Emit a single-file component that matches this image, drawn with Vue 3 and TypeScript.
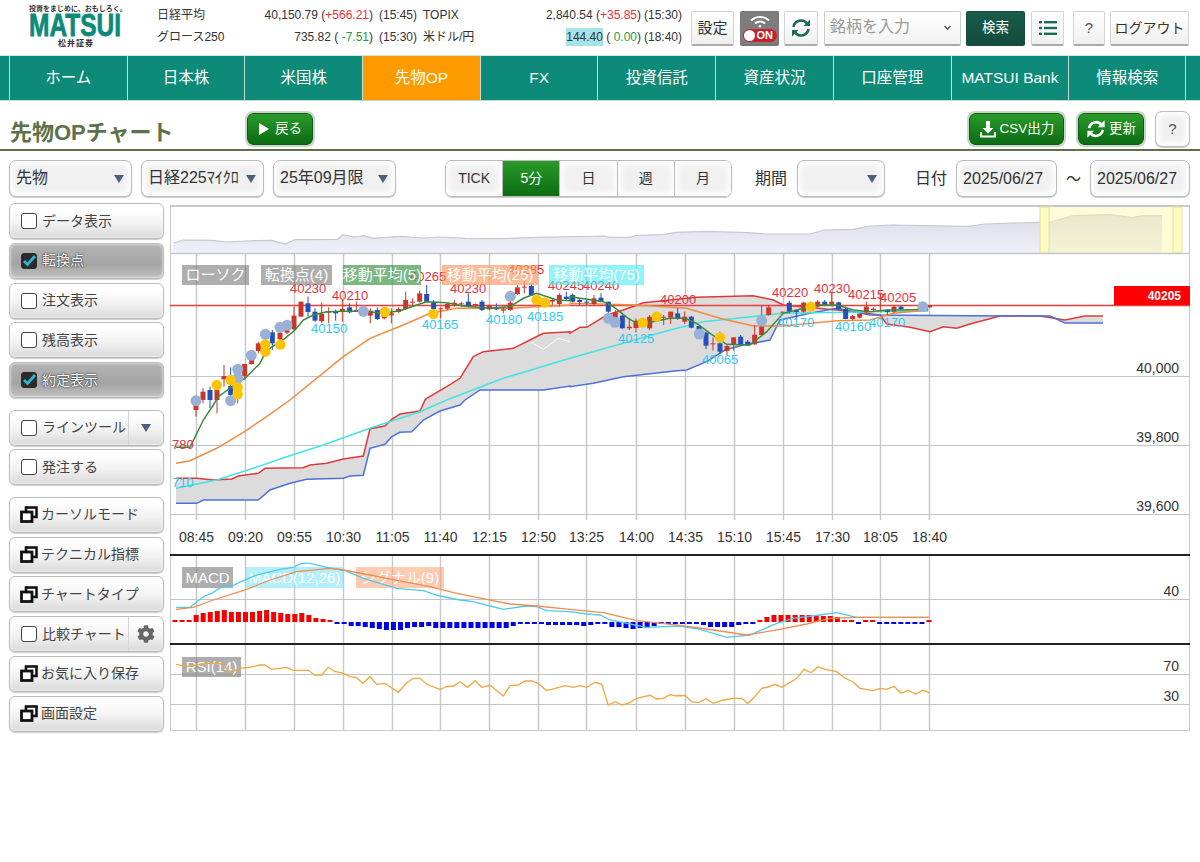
<template>
  <div class="page">
    <header class="top">
      <div class="logo">
        <div class="catch">投資をまじめに、おもしろく。</div>
        <div class="logo-word">MATSUI</div>
        <div class="logo-ja">松井証券</div>
      </div>

      <div class="quotes">
        <span>日経平均</span>
        <span class="num">40,150.79 (<em class="up">+566.21</em>)</span>
        <span class="time">(15:45)</span>
        <span>TOPIX</span>
        <span class="num">2,840.54 (<em class="up">+35.85</em>)</span>
        <span class="time">(15:30)</span>
        <span>グロース250</span>
        <span class="num">735.82 ( <em class="down">-7.51</em>)</span>
        <span class="time">(15:30)</span>
        <span>米ドル/円</span>
        <span class="num"><mark>144.40</mark> ( <em class="down">0.00</em>)</span>
        <span class="time">(18:40)</span>
      </div>

      <div class="tools">
        <button class="tbtn setting">設定</button>
        <button class="tbtn wifi">
          <svg width="24" height="14" viewBox="0 0 24 14" fill="none" stroke="#fff" stroke-width="2">
            <path d="M3 6.5a13 13 0 0 1 18 0" />
            <path d="M7 9.5a7.5 7.5 0 0 1 10 0" />
            <circle cx="12" cy="12.2" r="1.3" fill="#fff" stroke="none" />
          </svg>
          <span class="on-pill"><i></i>ON</span>
        </button>
        <button class="tbtn reload">
          <svg width="22" height="22" viewBox="0 0 22 22" fill="none" stroke="#1d6b57" stroke-width="2.6">
            <path d="M3.5 10a7.6 7.6 0 0 1 13.5-3.5" />
            <path d="M18.5 12a7.6 7.6 0 0 1-13.5 3.5" />
            <path d="M20 2.5v6.5h-6.5z" fill="#1d6b57" stroke="none" />
            <path d="M2 19.5v-6.5h6.5z" fill="#1d6b57" stroke="none" />
          </svg>
        </button>
        <div class="symbol">銘柄を入力<i></i></div>
        <button class="tbtn search">検索</button>
        <button class="tbtn list">
          <svg width="18" height="14" viewBox="0 0 18 14" fill="#1d6b57">
            <rect x="0" y="0" width="3" height="2.4" /><rect x="5" y="0" width="13" height="2.4" />
            <rect x="0" y="5.8" width="3" height="2.4" /><rect x="5" y="5.8" width="13" height="2.4" />
            <rect x="0" y="11.6" width="3" height="2.4" /><rect x="5" y="11.6" width="13" height="2.4" />
          </svg>
        </button>
        <button class="tbtn help">?</button>
        <button class="tbtn logout">ログアウト</button>
      </div>
    </header>

    <nav class="nav">
      <a v-for="item in navItems" :key="item" :class="{ active: item === '先物OP' }">{{ item }}</a>
    </nav>

    <div class="title-row">
      <h1>先物OPチャート</h1>
      <button class="gbtn back">
        <svg width="12" height="14" viewBox="0 0 12 14"><path d="M1 1l10 6-10 6z" fill="#fff" /></svg>
        戻る
      </button>
      <button class="gbtn csv">
        <svg width="18" height="18" viewBox="0 0 18 18" fill="#fff">
          <path d="M7 1h4v7h3.5l-5.5 5.5-5.5-5.5h3.500z" />
          <path d="M1 12h2v3.5h12v-3.5h2v5.5h-16z" />
        </svg>
        CSV出力
      </button>
      <button class="gbtn renew">
        <svg width="20" height="20" viewBox="0 0 22 22" fill="none" stroke="#fff" stroke-width="3">
          <path d="M3.5 10a7.6 7.6 0 0 1 13.5-3.5" />
          <path d="M18.5 12a7.6 7.6 0 0 1-13.5 3.5" />
          <path d="M20.5 1.5v7.5h-7.5z" fill="#fff" stroke="none" />
          <path d="M1.5 20.5v-7.5h7.5z" fill="#fff" stroke="none" />
        </svg>
        更新
      </button>
      <button class="soft help-2">?</button>
    </div>

    <div class="controls">
      <div class="soft sel w-type">先物<i></i></div>
      <div class="soft sel w-type">日経225ﾏｲｸﾛ<i></i></div>
      <div class="soft sel w-type">25年09月限<i></i></div>
      <div class="segments">
        <span v-for="s in segments" :key="s" :class="{ active: s === '5分' }">{{ s }}</span>
      </div>
      <label class="lab period">期間</label>
      <div class="soft sel w-period"><i></i></div>
      <label class="lab date">日付</label>
      <div class="soft field">2025/06/27</div>
      <span class="tilde">～</span>
      <div class="soft field last">2025/06/27</div>
    </div>

    <div class="body">
      <aside class="side">
        <div v-for="(group, g) in sideGroups" :key="g" class="side-group">
          <div v-for="b in group" :key="b.label" class="side-btn" :class="{ selected: b.checked }">
            <svg v-if="b.kind === 'win'" class="win" width="18" height="17" viewBox="0 0 18 17">
              <rect x="6" y="1.5" width="10.5" height="9.5" fill="#fff" stroke="#111" stroke-width="2.6" />
              <rect x="1.5" y="6" width="10.5" height="9.5" fill="#fff" stroke="#111" stroke-width="2.8" />
            </svg>
            <span v-else class="check" :class="{ checked: b.checked }">
              <svg v-if="b.checked" width="15" height="13" viewBox="0 0 15 13" fill="none">
                <path d="M2 7l3.5 3.5 7.5-8.5" stroke="#2fb4d2" stroke-width="2.8" />
              </svg>
            </span>
            <span class="side-label">{{ b.label }}</span>
            <span v-if="b.extra === 'arrow'" class="extra"><i class="tri"></i></span>
            <span v-if="b.extra === 'gear'" class="extra">
              <svg width="18" height="18" viewBox="0 0 512 512">
                <path fill="#666" d="M487.4 315.7l-42.6-24.6c4.3-23.2 4.3-47 0-70.2l42.6-24.6c4.9-2.8 7.1-8.6 5.5-14-11.1-35.6-30-67.8-54.7-94.6-3.8-4.1-10-5.1-14.8-2.3L380.8 110c-17.9-15.4-38.5-27.3-60.8-35.1V25.8c0-5.6-3.9-10.5-9.4-11.7-36.7-8.2-74.3-7.8-109.2 0-5.5 1.2-9.4 6.1-9.4 11.7V75c-22.2 7.9-42.8 19.8-60.8 35.1L88.7 85.5c-4.9-2.8-11-1.9-14.8 2.3-24.7 26.7-43.6 58.9-54.7 94.6-1.7 5.4.6 11.2 5.5 14L67.3 221c-4.3 23.2-4.3 47 0 70.2l-42.6 24.6c-4.9 2.8-7.1 8.6-5.5 14 11.1 35.6 30 67.8 54.7 94.6 3.8 4.1 10 5.1 14.8 2.3l42.6-24.6c17.9 15.4 38.5 27.3 60.8 35.1v49.2c0 5.6 3.9 10.5 9.4 11.7 36.7 8.2 74.3 7.8 109.2 0 5.5-1.2 9.4-6.1 9.4-11.7v-49.2c22.2-7.9 42.8-19.8 60.8-35.1l42.6 24.6c4.9 2.8 11 1.9 14.8-2.3 24.7-26.7 43.6-58.9 54.7-94.6 1.5-5.5-.7-11.3-5.6-14.1zM256 336c-44.1 0-80-35.9-80-80s35.9-80 80-80 80 35.9 80 80-35.9 80-80 80z" />
              </svg>
            </span>
          </div>
        </div>
      </aside>

      <svg class="chart" width="1020" height="527" viewBox="170 205 1020 527">
        <defs>
          <linearGradient id="navFill" x1="0" y1="0" x2="0" y2="1">
            <stop offset="0" stop-color="#dcdcea" />
            <stop offset="1" stop-color="#f0f0fa" />
          </linearGradient>
        </defs>

        <!-- navigator -->
        <rect x="170.5" y="205.5" width="1019" height="525" fill="#fff" stroke="#c8c8c8" />
        <rect x="170" y="205" width="1020" height="2" fill="#c8c8c8" />
        <polygon :points="navArea" fill="url(#navFill)" />
        <polyline :points="navLine" fill="none" stroke="#c8c8d0" stroke-width="1.2" />
        <rect x="1040" y="207" width="142" height="46" fill="#fbf7a8" fill-opacity="0.45" />
        <rect x="1040" y="207" width="9" height="46" fill="#fdfbc0" stroke="#e6e2a0" />
        <rect x="1173" y="207" width="9" height="46" fill="#fdfbc0" stroke="#e6e2a0" />
        <line x1="170" y1="253.5" x2="1190" y2="253.5" stroke="#c8c8c8" stroke-width="1.5" />

        <!-- grid -->
        <g stroke="#c8c8c8" stroke-width="1.5">
          <line v-for="x in gridX" :key="'m' + x" :x1="x" y1="254" :x2="x" y2="520" />
          <line v-for="x in gridX" :key="'c' + x" :x1="x" y1="556" :x2="x" y2="644" />
          <line v-for="x in gridX" :key="'r' + x" :x1="x" y1="645" :x2="x" y2="731" />
        </g>
        <g stroke="#c4c4c4" stroke-width="1.2">
          <line v-for="y in gridY" :key="y" x1="170" :y1="y" x2="1190" :y2="y" />
        </g>

        <!-- ichimoku cloud -->
        <polygon :points="cloudArea" fill="#dcdcdc" />
        <polyline :points="whiteLine" fill="none" stroke="#fff" />
        <polyline :points="cloudTopLine" fill="none" stroke="#de3a3a" stroke-width="1.5" />
        <polyline :points="cloudBottomLine" fill="none" stroke="#4a72dc" stroke-width="1.5" />
        <line x1="170" y1="305.5" x2="1190" y2="305.5" stroke="#ee3c3c" stroke-width="1.5" />
        <polyline :points="sma75" fill="none" stroke="#45e2e2" stroke-width="1.5" />
        <polyline :points="sma25" fill="none" stroke="#f08c42" stroke-width="1.5" />

        <!-- candles -->
        <g v-for="(c, i) in candles" :key="i" :fill="c.color" :stroke="c.color">
          <line :x1="c.x" :y1="c.wickTop" :x2="c.x" :y2="c.wickBottom" stroke-width="1" />
          <rect :x="c.x - 2.5" :y="c.top" width="5" :height="c.height" stroke="none" />
        </g>
        <polyline :points="sma5" fill="none" stroke="#3a8a3c" stroke-width="1.5" />

        <circle v-for="(p, i) in blueDots" :key="'b' + i" :cx="p[0]" :cy="p[1]" r="5.5" fill="#9ab1d6" />
        <circle v-for="(p, i) in yellowDots" :key="'y' + i" :cx="p[0]" :cy="p[1]" r="5.2" fill="#fcc400" />

        <text v-for="(t, i) in redLabels" :key="'rl' + i" class="peak" :x="t[1]" :y="t[2]">{{ t[0] }}</text>
        <text v-for="(t, i) in cyanLabels" :key="'cl' + i" class="bottom" :x="t[1]" :y="t[2]">{{ t[0] }}</text>

        <!-- legends -->
        <g v-for="l in legends" :key="l.text">
          <rect :x="l.x" :y="l.y" :width="l.w" :height="l.h" :fill="l.fill" />
          <text class="legend" :x="l.x + l.w / 2" :y="l.y + l.h - 5">{{ l.text }}</text>
        </g>

        <!-- axis -->
        <rect x="1114" y="286" width="76" height="19" fill="#ff0000" />
        <text class="price" x="1181" y="300">40205</text>
        <text v-for="t in axisY" :key="t[0]" class="axis-y" x="1179" :y="t[1]">{{ t[0] }}</text>
        <text v-for="(t, i) in timeLabels" :key="t" class="axis-x" :x="gridX[i]" y="542">{{ t }}</text>

        <!-- MACD -->
        <line x1="170" y1="555" x2="1190" y2="555" stroke="#222" stroke-width="2" />
        <rect
          v-for="(b, i) in macdBars"
          :key="'h' + i"
          :x="b.x"
          :y="b.y"
          width="5"
          :height="b.h"
          :fill="b.color"
        />
        <polyline :points="macdLine" fill="none" stroke="#4fcbe8" stroke-width="1.3" />
        <polyline :points="signalLine" fill="none" stroke="#ef8d50" stroke-width="1.3" />

        <!-- RSI -->
        <line x1="170" y1="644" x2="1190" y2="644" stroke="#222" stroke-width="2" />
        <polyline :points="rsiLine" fill="none" stroke="#f0a63f" stroke-width="1.3" />
      </svg>
    </div>
  </div>
</template>

<script setup lang="ts">
type Pt = number[];

const navItems = ['ホーム', '日本株', '米国株', '先物OP', 'FX', '投資信託', '資産状況', '口座管理', 'MATSUI Bank', '情報検索'];
const segments = ['TICK', '5分', '日', '週', '月'];

interface SideBtn {
  label: string;
  kind?: string;
  checked?: boolean;
  extra?: string;
}

const sideGroups: SideBtn[][] = [
  [
    { label: 'データ表示' },
    { label: '転換点', checked: true },
    { label: '注文表示' },
    { label: '残高表示' },
    { label: '約定表示', checked: true },
  ],
  [{ label: 'ラインツール', extra: 'arrow' }, { label: '発注する' }],
  [
    { label: 'カーソルモード', kind: 'win' },
    { label: 'テクニカル指標', kind: 'win' },
    { label: 'チャートタイプ', kind: 'win' },
    { label: '比較チャート', extra: 'gear' },
    { label: 'お気に入り保存', kind: 'win' },
    { label: '画面設定', kind: 'win' },
  ],
];

// coordinates below were read off 3x crops, so each block has its own origin
const from = (ox: number, oy: number, raw: number[]): Pt[] => {
  const out: Pt[] = [];
  for (let i = 0; i < raw.length; i += 2) out.push([ox + raw[i] / 3, oy + raw[i + 1] / 3]);
  return out;
};
const str = (pts: Pt[]) => pts.map((p) => `${p[0].toFixed(1)},${p[1].toFixed(1)}`).join(' ');

const gridX = [196, 245, 294, 343, 392, 440, 489, 538, 586, 636, 685, 734, 783, 832, 880, 929].map((x) => x + 0.5);
const gridY = [376.5, 445.5, 514.5, 599.5, 674.5, 704.5];

const timeLabels = ['08:45', '09:20', '09:55', '10:30', '11:05', '11:40', '12:15', '12:50', '13:25', '14:00', '14:35', '15:10', '15:45', '17:30', '18:05', '18:40'];
const axisY = [['40,000', 373], ['39,800', 442], ['39,600', 511], ['40', 596], ['70', 671], ['30', 701]] as [string, number][];

// navigator
const navRaw = [5,130, 20,120, 65,121, 85,126, 130,122, 155,121, 175,132, 190,119, 255,118, 263,104, 280,111, 295,107, 310,115, 350,109, 385,114, 410,111, 450,115, 500,116, 560,112, 660,108, 670,112, 700,112, 710,106, 750,104, 770,97, 815,94, 880,98, 905,102, 975,102, 995,90, 1040,88, 1065,78, 1100,75, 1215,79, 1240,72, 1320,67, 1340,66, 1375,47, 1430,44, 1465,53, 1480,47, 1510,47];
const navPts: Pt[] = [];
for (let i = 0; i < navRaw.length; i += 2) navPts.push([170 + navRaw[i] / 1.522, 200 + navRaw[i + 1] / 3]);
const navLine = str(navPts);
const navArea = str([[172, 253], ...navPts, [navPts[navPts.length - 1][0], 253]]);

// ichimoku
const cloudTop: Pt[] = [
  ...from(170, 400, [18,235, 80,235, 130,240, 185,237, 205,228, 265,220, 285,205, 400,203, 420,195, 470,190, 520,177, 580,168, 600,86, 645,78, 665,58, 690,42, 750,33, 765,0]),
  ...from(170, 250, [770,445, 830,410, 870,385, 910,320, 940,305, 1030,295, 1080,270, 1120,250, 1200,245]),
  ...from(570, 250, [0,250, 30,232, 50,232, 110,195, 160,180, 220,158, 380,142, 550,137, 610,150, 640,165, 800,180, 930,195, 950,222, 1020,232, 1080,245, 1120,230, 1160,235, 1200,222]),
  [970, 324], [1000, 316], [1040, 316], [1065, 320], [1085, 316], [1103, 316],
];
const cloudBottom: Pt[] = [
  ...from(170, 400, [18,310, 80,310, 100,300, 265,300, 300,270, 360,250, 410,238, 520,235, 540,228, 580,226, 600,145, 645,133, 665,110, 690,97, 725,95, 760,60, 810,33, 870,15, 885,0]),
  ...from(170, 250, [930,420, 1120,420, 1200,408]),
  ...from(570, 250, [0,410, 70,400, 160,380, 320,362, 350,360, 410,335, 465,300, 520,285, 600,270, 630,210, 720,190, 800,175, 900,195, 1200,197]),
  [1050, 316], [1065, 323], [1103, 323],
];
const cloudTopLine = str(cloudTop);
const cloudBottomLine = str(cloudBottom);
const cloudArea = str([...cloudTop, ...[...cloudBottom].reverse()]);
const whiteLine = str(from(170, 250, [1080,275, 1120,298, 1165,265, 1200,275]));

const sma5 = str([
  ...from(170, 400, [18,142, 60,142, 100,60, 130,15]),
  ...from(170, 250, [145,440, 200,400, 225,385, 270,340, 285,310, 300,295, 345,265, 375,240, 400,210, 430,195, 470,185, 520,184, 580,184, 640,190, 690,182, 740,165, 770,155, 830,158, 880,168, 960,175, 1020,170, 1060,145, 1100,130, 1160,150, 1200,152]),
  ...from(570, 250, [0,140, 100,155, 130,170, 175,205, 200,220, 240,217, 300,205, 345,205, 380,220, 420,250, 470,283, 540,285, 590,245, 640,190, 680,180, 740,165, 800,165, 850,180, 900,185, 950,180, 1000,180, 1075,178]),
]);
const sma25 = str([
  ...from(170, 400, [18,190, 60,182, 140,145, 220,97, 290,50, 360,0]),
  ...from(170, 250, [520,320, 600,265, 700,225, 780,190, 860,175, 1020,175, 1200,165]),
  ...from(570, 250, [0,160, 200,165, 350,175, 450,205, 550,228, 640,228, 800,212, 900,210, 970,190, 1075,180]),
]);
const sma75 = str([
  ...from(170, 400, [18,265, 140,240, 250,205, 350,170, 460,135, 600,85, 750,35, 830,0]),
  ...from(170, 250, [1000,385, 1200,325]),
  ...from(570, 250, [160,280, 300,240, 400,215, 500,205, 640,190, 1075,183]),
]);

// X, body top, body bottom, wick top, wick bottom, colour
type RawCandle = [number, number, number, number, number, 'r' | 'b'];
const candlesA: RawCandle[] = [
  [78,465,480,465,500,'r'],[99,425,450,415,460,'r'],[120,420,450,410,475,'b'],[141,420,450,400,490,'r'],[162,378,388,345,410,'r'],[182,408,435,352,440,'b'],[203,405,440,400,460,'r'],
  [224,342,378,342,390,'r'],[245,318,342,300,344,'r'],[265,280,303,275,310,'r'],[286,270,300,260,320,'r'],[307,247,280,240,300,'b'],[330,248,268,240,280,'r'],[351,240,248,225,252,'r'],
  [372,197,238,170,240,'r'],[393,155,200,155,200,'r'],[414,160,186,140,200,'b'],[435,185,212,175,215,'b'],[455,192,214,157,218,'r'],[476,185,188,172,220,'r'],[497,185,190,178,212,'b'],
  [517,177,185,150,215,'r'],[539,172,187,160,190,'b'],[559,180,184,155,185,'r'],[601,182,197,175,220,'r'],[622,180,207,172,210,'b'],[643,195,205,190,208,'r'],[664,190,196,175,220,'r'],
  [686,177,186,172,190,'r'],[707,150,177,125,180,'r'],[728,155,157,145,165,'r'],[749,130,155,122,158,'r'],[770,132,155,105,157,'b'],[791,157,177,150,190,'b'],[812,175,178,172,205,'r'],
  [832,162,176,158,180,'r'],[853,158,163,150,170,'r'],[874,160,163,155,170,'r'],[895,155,170,130,172,'b'],[916,162,165,160,170,'r'],[936,155,180,150,183,'b'],[958,168,178,165,180,'r'],
  [979,172,178,160,180,'b'],[1000,178,182,170,190,'r'],[1021,158,180,150,182,'r'],[1042,112,132,105,135,'r'],[1063,110,113,95,130,'r'],[1084,108,136,100,138,'b'],[1147,150,155,145,165,'r'],
  [1168,135,162,130,170,'r'],[1189,140,147,125,150,'b'],
];
const candlesB: RawCandle[] = [
  [8,135,155,130,157,'b'],[29,150,156,145,165,'b'],[50,155,158,150,165,'b'],[72,145,162,135,165,'r'],[93,143,155,130,157,'b'],[115,155,185,155,200,'b'],[136,188,205,180,210,'r'],
  [157,197,235,195,236,'b'],[178,230,235,205,240,'r'],[198,212,234,205,247,'r'],[239,200,235,195,240,'r'],[281,200,203,195,225,'r'],[302,185,203,185,222,'r'],[323,190,207,175,210,'b'],
  [344,200,215,185,222,'r'],[364,200,233,198,235,'b'],[387,228,265,228,265,'b'],[408,248,287,245,297,'b'],[429,280,283,262,302,'r'],[450,280,305,245,312,'b'],[471,288,303,285,315,'r'],
  [491,262,284,262,302,'r'],[512,260,284,255,288,'b'],[533,275,286,270,288,'b'],[554,254,283,225,285,'r'],[575,230,255,165,255,'r'],[596,172,195,165,197,'r'],[638,185,187,185,187,'r'],
  [658,158,185,152,190,'b'],[679,180,186,180,210,'b'],[701,158,185,155,188,'r'],[743,155,170,150,172,'r'],[764,155,165,150,167,'b'],[785,155,163,130,165,'r'],[806,157,178,155,180,'b'],
  [827,177,207,170,208,'b'],[848,198,207,195,210,'r'],[869,192,203,190,205,'r'],[889,170,187,155,195,'r'],[910,176,180,172,182,'r'],[931,180,183,130,185,'r'],[952,180,186,180,195,'b'],
  [972,170,185,165,190,'r'],[993,170,178,168,180,'b'],[1014,177,179,177,179,'r'],[1035,177,179,177,179,'b'],[1079,165,172,165,174,'r'],
];
const toCandle = (ox: number) => (c: RawCandle) => ({
  x: ox + c[0] / 3,
  top: 250 + c[1] / 3,
  height: Math.max((c[2] - c[1]) / 3, 1),
  wickTop: 250 + c[3] / 3,
  wickBottom: 250 + c[4] / 3,
  color: c[5] === 'r' ? '#c9362a' : '#2450b8',
});
const candles = [...candlesA.map(toCandle(170)), ...candlesB.map(toCandle(570))];

const blueDots = [
  ...from(170, 250, [78,452, 182,452, 203,358, 203,385, 244,316, 286,253, 330,232, 351,226, 580,184, 1021,139]),
  ...from(570, 250, [115,205, 135,217, 388,252, 575,212, 1058,170]),
];
const yellowDots = [
  ...from(170, 250, [140,405, 182,390, 203,412, 203,433, 286,283, 286,305, 331,284, 645,186, 790,192, 1100,150, 1125,158]),
  ...from(570, 250, [218,218, 260,200, 450,262, 722,170]),
];

const redLabels: [string, number, number][] = [
  ['40230', 290, 293], ['40210', 332, 300], ['40265', 410, 281], ['40230', 450, 293], ['40285', 508, 274],
  ['40245', 548, 290], ['40240', 583, 290], ['40200', 660, 304], ['40220', 772, 297], ['40230', 814, 293],
  ['40215', 848, 299], ['40205', 880, 302], ['780', 172, 449],
];
const cyanLabels: [string, number, number][] = [
  ['40150', 311, 333], ['40165', 422, 329], ['40180', 486, 324], ['40185', 527, 321], ['40125', 618, 343],
  ['40065', 702, 364], ['40170', 778, 327], ['40160', 835, 331], ['40170', 869, 327], ['710', 172, 487],
];

const legends = [
  { text: 'ローソク', x: 182, y: 265, w: 67, h: 20, fill: 'rgba(120,120,120,.6)' },
  { text: '転換点(4)', x: 261, y: 265, w: 71, h: 20, fill: 'rgba(120,120,120,.6)' },
  { text: '移動平均(5)', x: 343, y: 265, w: 78, h: 20, fill: 'rgba(70,155,80,.72)' },
  { text: '移動平均(25)', x: 442, y: 265, w: 96, h: 20, fill: 'rgba(250,150,90,.65)' },
  { text: '移動平均(75)', x: 549, y: 265, w: 95, h: 20, fill: 'rgba(70,235,245,.6)' },
  { text: 'MACD', x: 182, y: 567, w: 51, h: 21, fill: 'rgba(120,120,120,.6)' },
  { text: 'MACD(12,26)', x: 245, y: 567, w: 99, h: 21, fill: 'rgba(120,225,250,.55)' },
  { text: 'シグナル(9)', x: 356, y: 567, w: 88, h: 21, fill: 'rgba(250,160,115,.55)' },
  { text: 'RSI(14)', x: 182, y: 657, w: 59, h: 20, fill: 'rgba(120,120,120,.6)' },
];

// MACD histogram, heights in px from the zero line (positive red, negative blue)
const hist = [
  2,2,2,7,9,10,11,12,10,10,10,10,11,12,10,9,8,8,9,7,4,3,2,
  -1,-1,-4,-4,-5,-6,-7,-8,-8,-8,-6,-5,-5,-4,-6,-6,-6,-6,-6,-6,-6,-6,-6,-6,-6,-4,-2,-1,-1,-2,-3,-3,-3,-3,-3,-4,-3,-2,-2,-5,-5,-6,-7,-6,-6,-4,-2,-1,-1,-1,-1,
  -2,-3,-5,-5,-5,-5,-3,-2,-1,2,5,7,7,7,7,7,7,7,6,6,5,2,1,-1,1,1,-1,-1,-1,-1,-1,-1,-1,1,
];
const zero = 622;
const macdBars = hist.map((v, k) => ({
  x: 172.5 + (k * 754) / (hist.length - 1),
  y: v > 0 ? zero - Math.max(v, 2) : zero,
  h: Math.max(Math.abs(v), 2),
  color: v > 0 ? '#f40000' : '#0000e8',
}));

const macdLine = str([
  ...from(170, 550, [18,172, 60,172, 100,140, 125,130, 160,108, 185,108, 220,92, 260,75, 330,58, 370,52, 395,40, 420,40, 470,52, 520,60, 580,85, 680,115, 760,122, 810,138, 870,150, 910,155, 960,168, 1000,178, 1070,168, 1100,170, 1130,182, 1200,185, 1250,192, 1290,195, 1320,210, 1380,222, 1430,232, 1530,228]),
  ...from(680, 550, [0,228, 60,238, 140,262, 210,255, 240,242, 290,220, 340,205, 420,195, 470,188, 530,202, 600,202, 748,202]),
]);
const signalLine = str([
  ...from(170, 550, [18,178, 70,172, 130,150, 230,118, 300,90, 380,65, 480,55, 520,60, 600,75, 700,95, 780,110, 860,130, 950,148, 1020,162, 1100,168, 1200,178, 1300,188, 1400,212, 1530,226]),
  ...from(680, 550, [0,226, 100,240, 200,255, 300,238, 380,222, 450,205, 530,202, 748,202]),
]);
const rsiLine = str([
  ...from(170, 550, [18,343, 50,350, 80,345, 110,340, 150,340, 185,368, 205,355, 240,352, 270,345, 285,345, 305,358, 350,352, 370,361, 415,361, 435,376, 455,375, 475,352, 495,365, 515,368, 540,380, 560,383, 578,400, 600,380, 620,403, 645,400, 685,427, 710,398, 730,385, 750,385, 770,403, 810,418, 830,410, 850,408, 870,395, 893,412, 915,392, 935,412, 960,406, 1000,438, 1020,407, 1045,405, 1065,393, 1085,393, 1105,400, 1128,421, 1145,418, 1185,407, 1210,412, 1230,407, 1250,412, 1275,397, 1295,403, 1315,465, 1335,455, 1355,465, 1375,460, 1400,445, 1440,436, 1460,447, 1480,445, 1500,434, 1520,438, 1530,436]),
  ...from(680, 550, [0,438, 15,436, 35,455, 55,458, 78,446, 100,460, 130,450, 160,445, 185,445, 203,460, 220,445, 245,415, 265,411, 285,403, 307,412, 350,385, 372,358, 393,368, 414,350, 435,358, 470,365, 495,385, 518,395, 540,415, 580,422, 600,415, 620,418, 642,409, 663,430, 685,421, 707,433, 728,421, 748,428]),
]);
</script>

<style>
html,
body {
  margin: 0;
  background: #fff;
}
</style>

<style scoped>
.page {
  width: 1200px;
  height: 862px;
  overflow: hidden;
  background: #fff;
  color: #333;
  font-family: "Liberation Sans", "Noto Sans CJK JP", sans-serif;
  line-height: 1.2;
}

button {
  font-family: inherit;
  padding: 0;
  cursor: pointer;
  line-height: 1.2;
}

/* header */
.top {
  height: 55px;
  display: flex;
}
.logo {
  width: 94px;
  margin: 4px 0 0 29px;
  text-align: center;
  color: #333;
}
.catch {
  width: 98px;
  font-size: 7px;
  font-weight: 700;
  line-height: 9px;
  white-space: nowrap;
  text-align: left;
}
.logo-word {
  margin-top: 1px;
  height: 24px;
  font-size: 31px;
  font-weight: 700;
  line-height: 24px;
  text-align: left;
  white-space: nowrap;
  color: #0c8a78;
  -webkit-text-stroke: 0.8px #0c8a78;
  transform: scaleX(0.79);
  transform-origin: left;
}
.logo-ja {
  font-size: 8px;
  font-weight: 700;
  line-height: 11px;
  letter-spacing: 1px;
}
.quotes {
  margin: 4px 0 0 34px;
  width: 525px;
  height: 44px;
  display: grid;
  grid-template-columns: 85px 131px 50px 100px 118px 41px;
  grid-auto-rows: 22px;
  align-items: center;
  font-size: 12px;
  white-space: nowrap;
}
.quotes em {
  font-style: normal;
}
.num {
  text-align: right;
}
.time {
  text-align: left;
  padding-left: 6px;
}
.quotes span:nth-child(6n) {
  padding-left: 3px;
}
.up {
  color: #e0303c;
}
.down {
  color: #1f9a4c;
}
mark {
  background: #a6e3e8;
  color: #333;
  padding: 2px 0;
}
.tools {
  margin: 11px 0 0 9px;
  display: flex;
  align-items: flex-start;
}
.tbtn {
  height: 35px;
  border: 1px solid #d4d4d4;
  border-bottom: 2px solid #aaa;
  background: linear-gradient(#fff, #f0f0f0);
  border-radius: 2px;
  color: #333;
  display: flex;
  align-items: center;
  justify-content: center;
}
.setting {
  width: 43px;
  font-size: 15px;
}
.wifi {
  width: 39px;
  margin-left: 6px;
  flex-direction: column;
  background: #7d7d7d;
  border-color: #777;
}
.on-pill {
  display: flex;
  align-items: center;
  width: 34px;
  height: 13px;
  border-radius: 7px;
  background: #c8202c;
  color: #fff;
  font-size: 11px;
  font-weight: 700;
  line-height: 13px;
  margin-top: 1px;
}
.on-pill i {
  width: 11px;
  height: 11px;
  margin: 0 2px 0 1px;
  border-radius: 50%;
  background: #fff;
}
.reload {
  width: 34px;
  margin-left: 5px;
}
.symbol {
  position: relative;
  width: 137px;
  height: 35px;
  margin-left: 6px;
  padding-left: 5px;
  box-sizing: border-box;
  border: 1px solid #ccc;
  border-bottom: 2px solid #aaa;
  border-radius: 2px;
  background: linear-gradient(#fff, #f2f2f2);
  color: #999;
  font-size: 16px;
  line-height: 30px;
}
.symbol i {
  position: absolute;
  right: 9px;
  top: 11px;
  width: 5px;
  height: 5px;
  border-right: 2px solid #555;
  border-bottom: 2px solid #555;
  transform: rotate(45deg) scale(0.7);
}
.search {
  width: 59px;
  margin-left: 5px;
  background: linear-gradient(#1a5c4b, #134c3c);
  border-color: #134c3c;
  color: #fff;
  font-size: 13.5px;
}
.list {
  width: 33px;
  margin-left: 6px;
}
.help {
  width: 32px;
  margin-left: 9px;
  font-size: 15px;
  color: #555;
}
.logout {
  width: 79px;
  margin-left: 5px;
  font-size: 14px;
}

/* nav */
.nav {
  height: 46px;
  padding: 0 14px 0 9px;
  display: grid;
  grid-template-columns: repeat(10, 1fr);
  background: #0e8a78;
  border-top: 1px solid #cfe5e0;
  box-sizing: border-box;
  border-bottom: 1px solid #bcdcd6;
}
.nav a {
  display: flex;
  align-items: center;
  justify-content: center;
  border-left: 1px solid #bfe0da;
  color: #fff;
  font-size: 15.5px;
}
.nav a:last-child {
  border-right: 1px solid #bfe0da;
}
.nav a.active {
  background: #fd9a00;
}

/* title */
.title-row {
  height: 40px;
  display: flex;
  align-items: center;
  padding: 8px 10px 0;
  border-bottom: 2px solid #5d7148;
}
h1 {
  margin: 8px 0 0;
  width: 237px;
  font-size: 22px;
  font-weight: 700;
  color: #5d7148;
  white-space: nowrap;
}
.gbtn {
  height: 32px;
  display: flex;
  align-items: center;
  justify-content: center;
  gap: 3px;
  box-sizing: border-box;
  border: 1px solid #0c5c12;
  outline: 2px solid #c9d6c9;
  border-radius: 6px;
  background: linear-gradient(#2a9a2a, #0c6c14);
  color: #fff;
  font-size: 13.5px;
}
.back {
  width: 66px;
  gap: 5px;
}
.csv {
  width: 95px;
  margin-left: auto;
}
.renew {
  width: 66px;
  margin-left: 14px;
}
.help-2 {
  width: 35px;
  height: 36px;
  margin-left: 11px;
  font-size: 15px;
  color: #555;
}

/* shared light control */
.soft {
  box-sizing: border-box;
  border: 1px solid #bbb;
  border-radius: 7px;
  background: #f0f0f0;
  box-shadow: inset 0 0 7px 3px #fff, 0 1px 1px #ccc;
}

/* controls */
.controls {
  display: flex;
  align-items: center;
  margin: 9px 0 0 9px;
  height: 37px;
}
.sel {
  position: relative;
  height: 37px;
  line-height: 34px;
  padding-left: 6px;
  font-size: 16px;
  margin-right: 9px;
  white-space: nowrap;
}
.sel i,
.tri {
  display: block;
  width: 0;
  height: 0;
  border-left: 5px solid transparent;
  border-right: 5px solid transparent;
  border-top: 8px solid #4a607c;
}
.sel i {
  position: absolute;
  right: 7px;
  top: 14px;
}
.w-type {
  width: 123px;
}
.w-period {
  width: 88px;
  margin: 0;
}
.segments {
  display: flex;
  margin-left: 40px;
  height: 37px;
  width: 287px;
  box-sizing: border-box;
  border: 1px solid #bbb;
  border-radius: 7px;
  overflow: hidden;
  box-shadow: 0 1px 1px #ccc;
}
.segments span {
  flex: 1;
  display: flex;
  align-items: center;
  justify-content: center;
  font-size: 14px;
  background: #f0f0f0;
  border-left: 1px solid #bbb;
  box-shadow: inset 0 0 7px 3px #fff;
}
.segments span:first-child {
  border-left: none;
}
.segments .active {
  background: linear-gradient(#2a9a2a, #0c6c14);
  color: #fff;
  box-shadow: none;
}
.lab {
  font-size: 16px;
  white-space: nowrap;
}
.period {
  margin: 0 10px 0 23px;
}
.date {
  margin: 0 9px 0 30px;
}
.field {
  width: 101px;
  height: 37px;
  line-height: 35px;
  padding-left: 6px;
  font-size: 16px;
}
.field.last {
  width: 100px;
}
.tilde {
  width: 33px;
  text-align: center;
  font-size: 15px;
}

/* body */
.body {
  display: flex;
  margin: 6px 0 0 9px;
}
.side {
  width: 155px;
  display: flex;
  flex-direction: column;
  gap: 11.5px;
}
.side-group {
  display: flex;
  flex-direction: column;
  gap: 3.75px;
}
.side-btn {
  height: 36px;
  box-sizing: border-box;
  display: flex;
  align-items: center;
  padding-left: 11px;
  border: 1px solid #bbb;
  border-radius: 6px;
  background: linear-gradient(#fff 15%, #f2f2f2 55%, #d9d9d9);
  box-shadow: inset 0 0 3px #fff, 0 1px 1px #ccc;
  font-size: 14px;
  color: #444;
  white-space: nowrap;
}
.side-btn.selected {
  background: linear-gradient(#b4b4b4, #a4a4a4 60%, #c0c0c0);
  color: #fff;
  text-shadow: 0 0 2px #222, 0 0 1px #222;
}
.check {
  width: 16px;
  height: 16px;
  box-sizing: border-box;
  border: 1.5px solid #444;
  border-radius: 3px;
  margin-right: 5px;
  background: #fff;
  flex: none;
  position: relative;
}
.check.checked {
  background: #2b2b2b;
  border-color: #2b2b2b;
}
.check svg {
  position: absolute;
  left: 0;
  top: 0;
}
.win {
  margin-right: 3px;
  flex: none;
  margin-left: -1px;
}
.extra {
  margin-left: auto;
  width: 35px;
  height: 34px;
  flex: none;
  box-sizing: border-box;
  border-left: 1px solid #d4d4d4;
  display: flex;
  align-items: center;
  justify-content: center;
}
.chart {
  display: block;
  margin: 2px 0 0 6px;
  font-family: "Liberation Sans", "Noto Sans CJK JP", sans-serif;
}
.peak {
  fill: #e8303c;
  font-size: 13px;
}
.bottom {
  fill: #2fc8f2;
  font-size: 13px;
}
.legend {
  fill: #fff;
  font-size: 15px;
  text-anchor: middle;
}
.price {
  fill: #fff;
  font-size: 12px;
  font-weight: 700;
  text-anchor: end;
}
.axis-y {
  fill: #333;
  font-size: 14px;
  text-anchor: end;
}
.axis-x {
  fill: #333;
  font-size: 14px;
  text-anchor: middle;
}
</style>
